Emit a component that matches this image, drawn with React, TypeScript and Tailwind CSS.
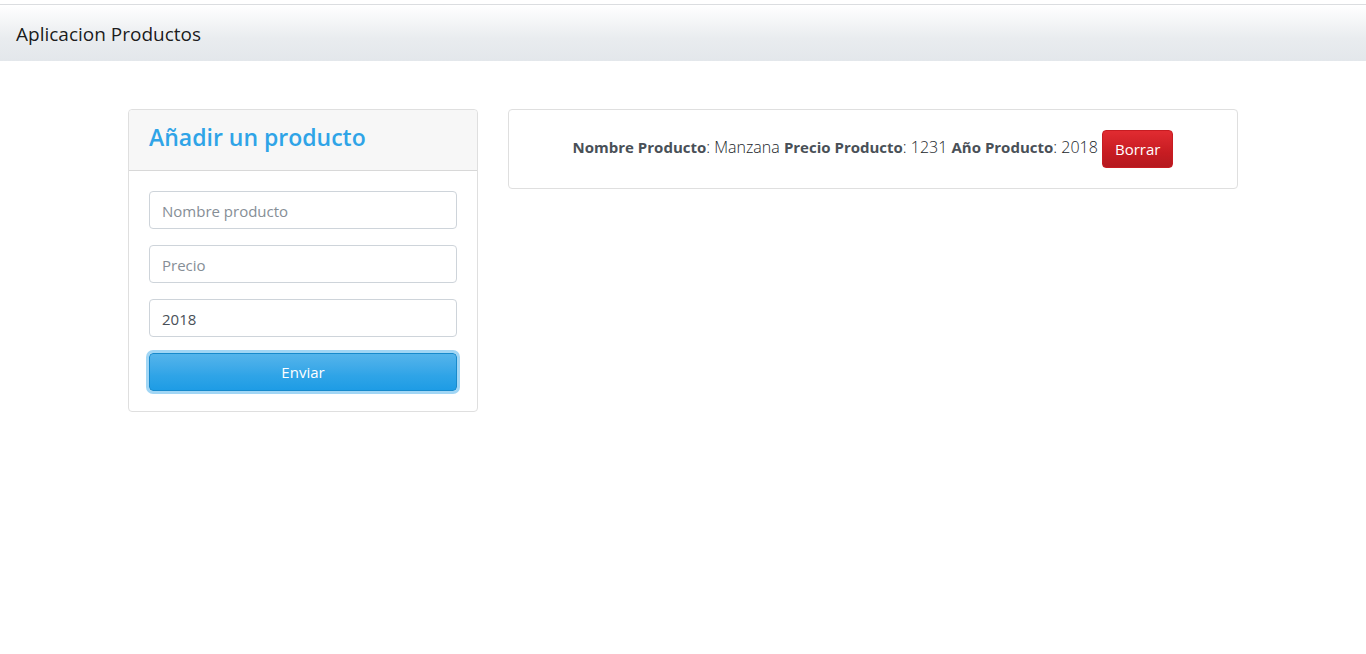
import { useState } from "react";

type Product = { id: number; name: string; price: number; year: number };

const inputClass =
  "block h-[38px] w-full rounded border border-[#ced4da] bg-white px-3 pt-0.5 text-[15px] leading-6 text-[#495057] outline-none placeholder:text-[#868e96]";

const labelClass = "text-[15px] font-bold text-[#495057]";

export default function App() {
  const [products, setProducts] = useState<Product[]>([
    { id: 1, name: "Manzana", price: 1231, year: 2018 },
  ]);

  return (
    <div className="font-['Open_Sans','Noto_Sans',sans-serif] text-[15px] leading-6 text-[#495057]">
      <nav className="mt-1 border-t border-[#dbdde0] bg-linear-to-b from-white via-[#e9ecef] via-60% to-[#e3e7eb] px-4 pt-[13px] pb-[11px]">
        <a href="#" className="block text-[19px] leading-8 text-black/90">Aplicacion Productos</a>
      </nav>
      <main className="mx-auto mt-12 flex max-w-[1110px] items-start gap-[30px]">
        <section className="w-[350px] shrink-0 rounded border border-[#dfdfdf] bg-white">
          <header className="rounded-t border-b border-[#d8d8d8] bg-[#f7f7f7] px-5 pt-3 pb-[18px]">
            <h4 className="text-[23px] leading-[30px] font-semibold text-[#2fa4e7]">Añadir un producto</h4>
          </header>
          <form className="flex flex-col gap-4 p-5" onSubmit={(e) => e.preventDefault()}>
            <input className={inputClass} type="text" aria-label="Nombre producto" placeholder="Nombre producto" />
            <input className={inputClass} type="text" aria-label="Precio" placeholder="Precio" />
            <input className={inputClass} type="text" aria-label="Año" defaultValue="2018" />
            <button type="submit" className="h-[38px] rounded border border-[#178acc] bg-linear-to-b from-[#54b4eb] via-[#2fa4e7] via-60% to-[#1d9ce5] text-[15px] text-white ring-3 ring-[#a1d6f5]">
              Enviar
            </button>
          </form>
        </section>
        <section className="min-w-0 flex-1">
          {products.map((p) => (
            <article key={p.id} className="rounded border border-[#dfdfdf] bg-white p-5 text-center text-base font-light text-[#212529]">
              <strong className={labelClass}>Nombre Producto</strong>: {p.name}{" "}
              <strong className={labelClass}>Precio Producto</strong>: {p.price}{" "}
              <strong className={labelClass}>Año Producto</strong>: {p.year}{" "}
              <button
                type="button"
                onClick={() => setProducts(products.filter((q) => q.id !== p.id))}
                className="h-[38px] rounded border border-[#c71c22] bg-linear-to-b from-[#e12b31] via-[#c71c22] via-60% to-[#b5191f] px-3 align-middle text-[15px] font-normal text-white"
              >
                Borrar
              </button>
            </article>
          ))}
        </section>
      </main>
    </div>
  );
}
